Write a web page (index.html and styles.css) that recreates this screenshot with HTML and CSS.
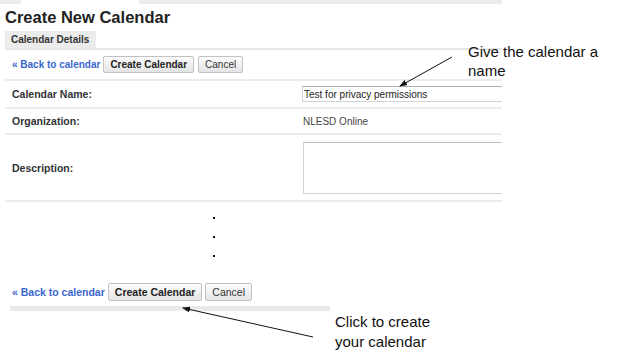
FILE: index.html
```html
<!DOCTYPE html>
<html lang="en">
<head>
    <meta charset="UTF-8">
    <meta name="viewport" content="width=device-width, initial-scale=1.0">
    <title>Create New Calendar</title>
    <link rel="stylesheet" href="styles.css">
</head>
<body>

<div class="topbar">
    <span class="seg-grey seg-first"></span>
    <span class="seg-white"></span>
    <span class="seg-grey seg-rest"></span>
</div>

<div class="page">
    <h1 class="title">Create New Calendar</h1>

    <div class="tabs">
        <span class="tab">Calendar Details</span>
    </div>

    <div class="toolbar">
        <a href="#" class="back">&laquo; Back to calendar</a>
        <button class="btn">Create Calendar</button>
        <button class="btn btn-plain">Cancel</button>
    </div>

    <div class="form">
        <div class="row row-name">
            <div class="label">Calendar Name:</div>
            <div class="value"><input type="text" value="Test for privacy permissions"></div>
        </div>
        <div class="row row-org">
            <div class="label">Organization:</div>
            <div class="value text">NLESD Online</div>
        </div>
        <div class="row row-desc">
            <div class="label">Description:</div>
            <div class="value"><textarea></textarea></div>
        </div>
    </div>

    <div class="dots">
        <span></span>
        <span></span>
        <span></span>
    </div>

    <div class="toolbar toolbar-bottom">
        <a href="#" class="back">&laquo; Back to calendar</a>
        <button class="btn">Create Calendar</button>
        <button class="btn btn-plain">Cancel</button>
    </div>
    <div class="footbar"></div>
</div>

<!-- callouts -->
<div class="note note-name">Give the calendar a<br>name</div>
<div class="note note-create">Click to create<br>your calendar</div>

<svg class="arrows" width="624" height="356" viewBox="0 0 624 356">
    <defs>
        <marker id="head" markerWidth="8" markerHeight="6" refX="7" refY="3" orient="auto" markerUnits="userSpaceOnUse">
            <path d="M0,0 L8,3 L0,6 z" fill="#111"/>
        </marker>
    </defs>
    <line x1="452" y1="57" x2="400" y2="86" stroke="#111" stroke-width="1" marker-end="url(#head)"/>
    <line x1="313" y1="337" x2="183" y2="308" stroke="#111" stroke-width="1" marker-end="url(#head)"/>
</svg>

</body>
</html>
```

FILE: styles.css
```css
body {
    margin: 0;
    width: 624px;
    height: 356px;
    overflow: hidden;
    position: relative;
    background: #fff;
    font-family: "Liberation Sans", Arial, sans-serif;
    color: #333;
}
.topbar {
    display: flex;
    width: 502px;
    height: 4px;
}
.seg-grey {
    background: #ececec;
}
.seg-first {
    width: 21px;
}
.seg-white {
    width: 118px;
}
.seg-rest {
    flex: 1;
}
.page {
    margin-left: 5px;
    width: 497px;
    overflow: hidden;
}
.title {
    margin: 3px 0 0 0;
    font-size: 16.5px;
    line-height: 20px;
    color: #222;
}
.tabs {
    display: flex;
    margin-top: 4px;
    border-bottom: 2px solid #e6e6e6;
}
.tab {
    height: 17px;
    line-height: 17px;
    padding: 0 7px 0 6px;
    background: #ececec;
    font-size: 10px;
    font-weight: bold;
    color: #333;
}
.toolbar {
    display: flex;
    align-items: center;
    padding: 6px 0 6px 7px;
}
.back {
    color: #3a66cc;
    font-size: 10px;
    font-weight: bold;
    text-decoration: none;
    margin-right: 3px;
}
.btn {
    height: 17px;
    padding: 0 6px;
    border: 1px solid #c2c2c2;
    border-radius: 2px;
    background: linear-gradient(#fcfcfc, #e4e4e4);
    font-family: inherit;
    font-size: 10px;
    font-weight: bold;
    color: #222;
    cursor: pointer;
}
.btn-plain {
    margin-left: 4px;
    font-weight: normal;
    color: #333;
}
.row {
    display: flex;
    align-items: center;
    border-top: 2px solid #ececec;
}
.row-desc {
    border-bottom: 2px solid #ececec;
}
.row-name {
    height: 26px;
}
.row-org {
    height: 24px;
}
.row-desc {
    height: 65px;
}
.label {
    flex: none;
    box-sizing: border-box;
    width: 297px;
    padding-left: 7px;
    font-size: 10.5px;
    font-weight: bold;
    color: #333;
}
.value {
    flex: 1;
    min-width: 0;
    overflow: hidden;
}
.value.text {
    font-size: 10px;
    color: #444;
}
.value input {
    display: block;
    box-sizing: border-box;
    width: 260px;
    height: 16px;
    padding: 0 1px;
    border: 1px solid #d2d2d2;
    border-top-color: #b0b0b0;
    border-right: none;
    font-family: inherit;
    font-size: 10px;
    color: #222;
}
.value textarea {
    display: block;
    box-sizing: border-box;
    margin-left: 1px;
    width: 260px;
    height: 52px;
    border: 1px solid #d2d2d2;
    border-top-color: #bdbdbd;
    resize: none;
}
.value.text {
    padding-left: 1px;
}
.dots {
    display: flex;
    flex-direction: column;
    gap: 17px;
    margin: 15px 0 0 208px;
}
.dots span {
    width: 2px;
    height: 2px;
    background: #111;
}
.toolbar-bottom {
    padding: 26px 0 0 7px;
}
.toolbar-bottom .back,
.toolbar-bottom .btn {
    font-size: 10.5px;
}
.toolbar-bottom .btn {
    height: 18px;
}
.toolbar-bottom .btn-plain {
    margin-left: 3px;
}
.footbar {
    margin: 5px 0 0 5px;
    width: 320px;
    height: 5px;
    background: #e9e9e9;
}
.note {
    position: absolute;
    font-size: 15px;
    line-height: 19px;
    color: #111;
}
.note-name {
    left: 468px;
    top: 42px;
}
.note-create {
    left: 335px;
    top: 312px;
    line-height: 20px;
}
.arrows {
    position: absolute;
    left: 0;
    top: 0;
    pointer-events: none;
}
```
